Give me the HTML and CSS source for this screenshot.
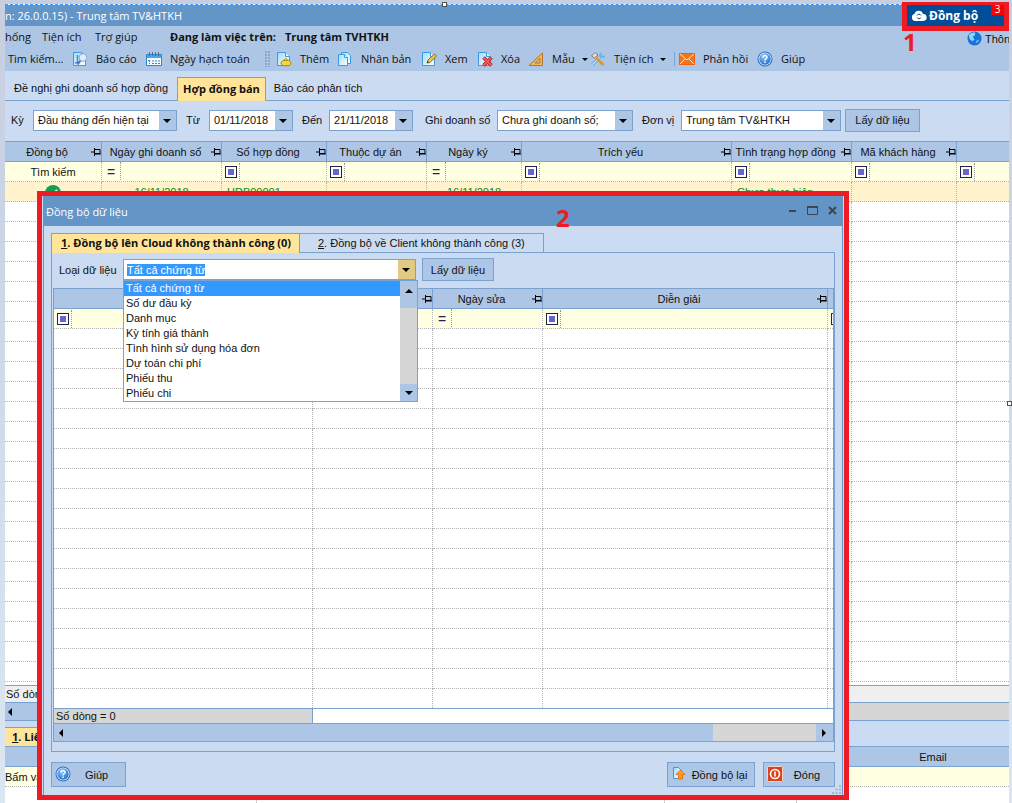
FILE: index.html
```html
<!DOCTYPE html>
<html lang="vi">
<head>
    <meta charset="UTF-8">
    <meta name="viewport" content="width=device-width, initial-scale=1.0">
    <title>Đồng bộ dữ liệu</title>
    <link rel="stylesheet" href="styles.css">
</head>
<body>
    <!-- shared icons -->
    <svg class="defs" width="0" height="0">
        <defs>
            <linearGradient id="paper" x1="0" y1="0" x2="1" y2="1">
                <stop offset="0" stop-color="#9fdcff"/>
                <stop offset="1" stop-color="#ffffff"/>
            </linearGradient>
            <radialGradient id="ball" cx="0.4" cy="0.3" r="0.8">
                <stop offset="0" stop-color="#8fc8ff"/>
                <stop offset="1" stop-color="#1565c8"/>
            </radialGradient>
            <symbol id="page" viewBox="0 0 16 16">
                <path d="M1.500 1.500h8l4 4v9h-12z" fill="url(#paper)" stroke="#3a9be0"/>
                <path d="M9.500 1.500v4h4" fill="#fff" stroke="#3a9be0"/>
            </symbol>
            <symbol id="pin" viewBox="0 0 10 8">
                <path d="M0 4h3M3.500 0v8M4 1.500h5v4H4M4 6h6" fill="none" stroke="#000"/>
            </symbol>
            <symbol id="help" viewBox="0 0 16 16">
                <circle cx="8" cy="8" r="7.500" fill="#2a6fc4"/>
                <circle cx="8" cy="8" r="6.500" fill="#dcecff"/>
                <circle cx="8" cy="8" r="5.700" fill="url(#ball)"/>
                <path d="M6 6.500c0-3 4.200-2.600 4 0c-.2 1.300-2 1.300-2 3M8 10.500v1.500" fill="none" stroke="#fff" stroke-width="1.500"/>
            </symbol>
        </defs>
    </svg>

    <div class="window">
        <header class="titlebar">n: 26.0.0.15) - Trung tâm TV&amp;HTKH</header>

        <nav class="menu">
            <a href="#">hống</a>
            <a href="#">Tiện ích</a>
            <a href="#">Trợ giúp</a>
            <b>Đang làm việc trên:</b>
            <b>Trung tâm TVHTKH</b>
            <a href="#" class="notice">
                <svg width="15" height="15" viewBox="0 0 16 16"><circle cx="8" cy="8" r="7.500" fill="#1673d8"/><path d="M2 5c1-3 5-4 7-3l-1 3-2 1 2 3-2 2-3-2z" fill="#8fd0ff"/><path d="M10 10l3-1-1 3-3 1z" fill="#5fb2f5"/></svg>
                Thôn
            </a>
        </nav>

        <div class="toolbar">
            <button>Tìm kiếm...</button>
            <button>
                <svg width="16" height="16" viewBox="0 0 16 16"><use href="#page"/><path d="M5.500 4v7.500L3 12" fill="none" stroke="#4a7fd0" stroke-width="1.500"/><path d="M8.500 9.500L5.500 13.500" stroke="#4a6fae" stroke-width="2"/><circle cx="11" cy="6.500" r="3.800" fill="#d9f0ff" stroke="#8aa6d0"/></svg>
                Báo cáo
            </button>
            <button>
                <svg width="16" height="16" viewBox="0 0 16 16"><path d="M.5 3.500h15v11H.5z" fill="#f4fbff" stroke="#2f86cf"/><path d="M1 4h14v3H1z" fill="#4ba6e6"/><path d="M3.500 1v4M6.500 1v4M9.500 1v4M12.500 1v4" stroke="#5b6b7c"/><path d="M3.500 9v4M2 9.500h2M6 10h8M6 12.500h8" fill="none" stroke="#2f86cf" stroke-dasharray="2 1"/></svg>
                Ngày hạch toán
            </button>
            <i class="grip"></i>
            <button>
                <svg width="16" height="16" viewBox="0 0 16 16"><use href="#page"/><ellipse cx="10" cy="12" rx="5" ry="2.800" fill="#f5d938" stroke="#a88b12"/><path d="M8 9.500c0-2.500 3.500-2.500 3.500 0z" fill="#f9e77a" stroke="#a88b12"/></svg>
                Thêm
            </button>
            <button>
                <svg width="16" height="16" viewBox="0 0 16 16"><path d="M4.500 1.500h6l3 3v8h-9z" fill="url(#paper)" stroke="#3a9be0"/><path d="M1.500 3.500h6l3 3v8h-9z" fill="url(#paper)" stroke="#3a9be0"/><path d="M7.500 3.500v3h3" fill="#fff" stroke="#3a9be0"/></svg>
                Nhân bản
            </button>
            <button>
                <svg width="16" height="16" viewBox="0 0 16 16"><use href="#page"/><path d="M6 12l1-3 6.500-6 2 2L9 11.500z" fill="#f6c443" stroke="#8f6a1c"/><path d="M6 12l.6-2 1.500 1.400z" fill="#333"/></svg>
                Xem
            </button>
            <button>
                <svg width="16" height="16" viewBox="0 0 16 16"><use href="#page"/><path d="M6.500 6.500l8 8M14.500 6.500l-8 8" stroke="#a92020" stroke-width="3.600"/><path d="M6.500 6.500l8 8M14.500 6.500l-8 8" stroke="#ee5a5a" stroke-width="2"/></svg>
                Xóa
            </button>
            <button>
                <svg width="16" height="16" viewBox="0 0 16 16"><path d="M1 14.500L14.500 2v12.500z" fill="#f0b952" stroke="#b5752a"/><path d="M7 12l5-4.500V12z" fill="#adc6e5" stroke="#b5752a"/></svg>
                Mẫu <i class="caret"></i>
            </button>
            <button>
                <svg width="16" height="16" viewBox="0 0 16 16"><path d="M2.500 13.500l8-8" stroke="#4a9ad8" stroke-width="3"/><path d="M2.500 13.500l8-8" stroke="#d5efff" stroke-width="1.200"/><path d="M10.500 1.500v4h4.500" fill="none" stroke="#6fb3e6" stroke-width="2"/><path d="M6 7l7.500 7" stroke="#d59a3a" stroke-width="3"/><path d="M1.500 5L5 1.500l3 2.500-3.500 3z" fill="#e4e0d8" stroke="#85796a"/></svg>
                Tiện ích <i class="caret"></i>
            </button>
            <i class="bar"></i>
            <button>
                <svg width="16" height="16" viewBox="0 0 16 16"><path d="M.5 2.500h15v11H.5z" fill="#f2741c" stroke="#ef5f10"/><path d="M1 3l7 6 7-6M1 13l5-5M15 13l-5-5" fill="none" stroke="#ffe6cc"/></svg>
                Phản hồi
            </button>
            <button><svg width="16" height="16"><use href="#help"/></svg>Giúp</button>
        </div>

        <div class="tabs">
            <a href="#">Đề nghị ghi doanh số hợp đồng</a>
            <a href="#" class="active">Hợp đồng bán</a>
            <a href="#">Báo cáo phân tích</a>
        </div>

        <form class="filters">
            <label for="period" class="l-period">Kỳ</label>
            <span class="combo w-period"><select id="period"><option>Đầu tháng đến hiện tại</option></select></span>
            <label for="from" class="l-from">Từ</label>
            <span class="combo w-date"><select id="from"><option>01/11/2018</option></select></span>
            <label for="to" class="l-to">Đến</label>
            <span class="combo w-date"><select id="to"><option>21/11/2018</option></select></span>
            <label for="sales" class="l-sales">Ghi doanh số</label>
            <span class="combo w-sales"><select id="sales"><option>Chưa ghi doanh số;</option></select></span>
            <label for="unit" class="l-unit">Đơn vị</label>
            <span class="combo w-unit"><select id="unit"><option>Trung tâm TV&amp;HTKH</option></select></span>
            <button type="button" class="btn">Lấy dữ liệu</button>
        </form>

        <table class="grid" id="contracts" data-rows="24">
            <colgroup><col class="c97"><col class="c120"><col class="c105"><col class="c100"><col class="c95"><col class="c210"><col class="c120"><col class="c105"><col></colgroup>
            <thead>
                <tr>
                    <th>Đồng bộ<svg><use href="#pin"/></svg></th>
                    <th>Ngày ghi doanh số<svg><use href="#pin"/></svg></th>
                    <th>Số hợp đồng<svg><use href="#pin"/></svg></th>
                    <th>Thuộc dự án<svg><use href="#pin"/></svg></th>
                    <th>Ngày ký<svg><use href="#pin"/></svg></th>
                    <th>Trích yếu<svg><use href="#pin"/></svg></th>
                    <th>Tình trạng hợp đồng<svg><use href="#pin"/></svg></th>
                    <th>Mã khách hàng<svg><use href="#pin"/></svg></th>
                    <th></th>
                </tr>
            </thead>
            <tbody>
                <tr class="search">
                    <td class="center">Tìm kiếm</td>
                    <td><i class="eq">=</i></td>
                    <td><i class="box"></i></td>
                    <td><i class="box"></i></td>
                    <td><i class="eq">=</i></td>
                    <td><i class="box"></i></td>
                    <td><i class="box"></i></td>
                    <td><i class="box"></i></td>
                    <td><i class="box"></i></td>
                </tr>
                <tr class="selected">
                    <td class="center"><svg width="16" height="16" viewBox="0 0 16 16"><circle cx="8" cy="8" r="8" fill="#0fa14f"/><path d="M4 8l3 3 5-6" fill="none" stroke="#fff" stroke-width="2"/></svg></td>
                    <td class="center">16/11/2018</td>
                    <td>HDB00001</td>
                    <td></td>
                    <td class="center">16/11/2018</td>
                    <td></td>
                    <td>Chưa thực hiện</td>
                    <td></td>
                    <td></td>
                </tr>
            </tbody>
        </table>
        <div class="total">Số dòng</div>
        <div class="scroll main-scroll"><span class="thumb"><i class="left"></i></span></div>

        <div class="detail-tabs"><a href="#"><u>1</u>. Liê</a></div>
        <table class="grid detail">
            <colgroup><col class="c252"><col class="c408"><col class="c132"><col></colgroup>
            <thead><tr><th></th><th></th><th></th><th class="email">Email</th></tr></thead>
            <tbody>
                <tr class="search"><td colspan="4">Bấm vào</td></tr>
                <tr><td></td><td></td><td></td><td></td></tr>
            </tbody>
        </table>
    </div>

    <section class="dialog" role="dialog" aria-labelledby="dialogTitle">
        <div class="dialog-title">
            <span id="dialogTitle">Đồng bộ dữ liệu</span>
            <button aria-label="Thu nhỏ"><svg width="11" height="11" viewBox="0 0 11 11"><path d="M2 6h7" stroke="#444" stroke-width="2"/></svg></button>
            <button aria-label="Phóng to"><svg width="11" height="11" viewBox="0 0 11 11"><path d="M.5 1.500h10v8H.5z" fill="none" stroke="#444"/><path d="M0 2h11" stroke="#444" stroke-width="2"/></svg></button>
            <button aria-label="Đóng cửa sổ"><svg width="11" height="11" viewBox="0 0 11 11"><path d="M2 2l7 7M9 2l-7 7" stroke="#444" stroke-width="2"/></svg></button>
        </div>
        <div class="dialog-body">
            <div class="dialog-tabs">
                <a href="#" class="active"><u>1</u>. Đồng bộ lên Cloud không thành công (0)</a>
                <a href="#"><u>2</u>. Đồng bộ về Client không thành công (3)</a>
            </div>
            <div class="panel">
                <div class="panel-filter">
                    <label for="dataType">Loại dữ liệu</label>
                    <span class="combo open">
                        <input type="text" id="dataType" value="Tất cả chứng từ" role="combobox" aria-expanded="true" aria-controls="typeList">
                        <span class="list-wrap">
                            <ul id="typeList" role="listbox">
                                <li role="option" aria-selected="true">Tất cả chứng từ</li>
                                <li role="option">Số dư đầu kỳ</li>
                                <li role="option">Danh mục</li>
                                <li role="option">Kỳ tính giá thành</li>
                                <li role="option">Tình hình sử dụng hóa đơn</li>
                                <li role="option">Dự toán chi phí</li>
                                <li role="option">Phiếu thu</li>
                                <li role="option">Phiếu chi</li>
                            </ul>
                            <span class="list-scroll"><i class="up"></i><i class="down"></i></span>
                        </span>
                    </span>
                    <button class="btn">Lấy dữ liệu</button>
                </div>
                <div class="panel-grid">
                    <table class="grid" id="failed" data-rows="19">
                        <colgroup><col class="c259"><col class="c120"><col class="c110"><col class="c285"><col></colgroup>
                        <thead>
                            <tr>
                                <th></th>
                                <th><svg><use href="#pin"/></svg></th>
                                <th>Ngày sửa<svg><use href="#pin"/></svg></th>
                                <th>Diễn giải<svg><use href="#pin"/></svg></th>
                                <th></th>
                            </tr>
                        </thead>
                        <tbody>
                            <tr class="search">
                                <td><i class="box"></i></td>
                                <td><i class="box"></i></td>
                                <td><i class="eq">=</i></td>
                                <td><i class="box"></i></td>
                                <td><i class="box"></i></td>
                            </tr>
                        </tbody>
                    </table>
                    <div class="total"><span>Số dòng = 0</span></div>
                    <div class="scroll"><span class="thumb"><i class="left"></i></span><span class="end"><i class="right"></i></span></div>
                </div>
            </div>
            <div class="actions">
                <button class="btn help"><svg width="16" height="16"><use href="#help"/></svg>Giúp</button>
                <button class="btn retry">
                    <svg width="16" height="16" viewBox="0 0 16 16"><path d="M1.500 1.500h5l3 3v8h-8z" fill="url(#paper)" stroke="#3a9be0"/><path d="M8.500 4l4.500 4.500h-2.500V13h-4V8.500H4z" fill="#ff9a1f" stroke="#e07a10"/></svg>
                    Đồng bộ lại
                </button>
                <button class="btn close">
                    <svg width="16" height="16" viewBox="0 0 16 16"><rect x=".5" y=".5" width="15" height="15" rx="1" fill="#d9431f" stroke="#f7d3c8"/><circle cx="8" cy="8" r="4.500" fill="none" stroke="#fff" stroke-width="1.600"/><path d="M8 5.500v5" stroke="#fff" stroke-width="1.600"/></svg>
                    Đóng
                </button>
            </div>
        </div>
        <svg class="resize" width="9" height="9" viewBox="0 0 9 9"><path d="M7 0h2v2H7zM3.500 3.500h2v2h-2zM7 3.500h2v2H7zM0 7h2v2H0zM3.500 7h2v2h-2zM7 7h2v2H7z" fill="#a9b4c4"/></svg>
        <strong class="step two">2</strong>
    </section>

    <!-- highlighted sync button -->
    <div class="sync">
        <button>
            <svg width="16" height="12" viewBox="0 0 16 12"><path d="M4 11a3.600 3.600 0 0 1-.6-7A4.500 4.500 0 0 1 12 4a3.500 3.500 0 0 1 .3 7z" fill="#fff"/><path d="M6 5.500a2.200 2.200 0 0 1 4 0M10 7.500a2.200 2.200 0 0 1-4 0" fill="none" stroke="#004e98"/></svg>
            Đồng bộ
            <span class="badge">3</span>
        </button>
        <strong class="step one">1</strong>
    </div>
    <i class="handle top"></i>
    <i class="handle side"></i>

    <script>
        // fill the tables with blank rows
        document.querySelectorAll("table[data-rows]").forEach(function(table) {
            const columns = table.querySelectorAll("col").length;
            for (let i = 0; i < Number(table.dataset.rows); i++) {
                const row = table.tBodies[0].insertRow();
                for (let j = 0; j < columns; j++) row.insertCell();
            }
        });

        const dataType = document.getElementById("dataType");
        dataType.focus({ preventScroll: true });
        dataType.select();
    </script>
</body>
</html>
```
FILE: styles.css
```css
* {
    margin: 0;
    padding: 0;
    box-sizing: border-box;
}
body {
    position: relative;
    height: 100vh;
    overflow: hidden;
    padding: 4px 3px 0 5px;
    background: linear-gradient(#c6cedf, #dbe6f3);
    font: 11px/14px "Liberation Sans", Arial, sans-serif;
    color: #111;
}
a {
    color: inherit;
    text-decoration: none;
}
button, input, select {
    font: inherit;
    color: inherit;
}
i {
    font-style: normal;
}
.defs {
    position: absolute;
}
.window {
    height: 100%;
    overflow: hidden;
    background: #fff;
    border-top: 1px dashed #3399ff;
}

/* title, menu, toolbar */
.titlebar {
    height: 21px;
    padding-top: 1px;
    background: #6495c7;
    color: #fff;
    font: 11px/20px "Open Sans", sans-serif;
}
.menu {
    display: grid;
    grid-template-columns: 37px 53px 75px 115px 1fr auto;
    height: 23px;
    background: #adc6e5;
    font: 11px/22px "Open Sans", sans-serif;
    white-space: nowrap;
}
.notice {
    display: flex;
    gap: 3px;
    width: 42px;
    overflow: hidden;
    padding-top: 5px;
    font: 11px/16px "Liberation Sans", Arial, sans-serif;
}
.notice svg {
    flex: none;
}
.toolbar {
    display: grid;
    grid-template-columns: 65px 74px 118px 12px 61px 84px 56px 51px 62px 83px 6px 78px auto;
    justify-content: start;
    align-items: center;
    height: 22px;
    padding: 0 0 2px 3px;
    background: #adc6e5;
}
.toolbar button {
    display: flex;
    align-items: center;
    gap: 7px;
    height: 20px;
    border: 0;
    background: none;
    font: 11px/20px "Open Sans", sans-serif;
    white-space: nowrap;
}
.toolbar svg {
    flex: none;
    margin-left: -1px;
    margin-right: 1px;
}
.grip {
    width: 5px;
    height: 16px;
    background: radial-gradient(circle at 1px 1px, #8ba6c8 1px, transparent 1px) 0 0 / 3px 3px;
}
.bar {
    width: 1px;
    height: 14px;
    background: #7ba2ce;
}
.caret, .combo::after, .left, .right, .up, .down {
    width: 0;
    height: 0;
    border: 0 solid transparent;
    border-top-color: #000;
}
.caret {
    border-width: 3px 3px 0;
}

/* tabs */
.tabs {
    display: flex;
    height: 30px;
    padding: 6px 0 0 1px;
    background: #cbdbf1;
    border-bottom: 1px solid #7ba2ce;
}
.tabs a {
    height: 23px;
    padding: 0 9px 0 8px;
    line-height: 23px;
    white-space: nowrap;
}
.tabs .active {
    height: 24px;
    padding: 0 5px;
    background: #ffe49a;
    border: 1px solid #7ba2ce;
    border-bottom: 0;
    font: bold 11px/22px "Open Sans", sans-serif;
}

/* filter row */
.filters {
    display: flex;
    align-items: center;
    height: 40px;
    padding-bottom: 2px;
    background: #cbdbf1;
    white-space: nowrap;
}
.l-period { width: 28px; padding-left: 6px; }
.l-from { width: 32px; padding-left: 9px; }
.l-to { width: 36px; padding-left: 9px; }
.l-sales { width: 84px; padding-left: 12px; }
.l-unit { width: 48px; padding-left: 9px; }
.w-period { width: 144px; }
.w-date { width: 84px; }
.w-sales { width: 136px; }
.w-unit { width: 160px; }
.filters .btn {
    width: 75px;
    margin-left: 4px;
}
.combo {
    position: relative;
    flex: none;
    height: 21px;
    border: 1px solid #7ba2ce;
    background: #fff;
}
.combo::before {
    content: "";
    position: absolute;
    top: 0;
    right: 0;
    width: 17px;
    height: 100%;
    background: #adc6e5;
}
.combo::after {
    content: "";
    position: absolute;
    top: 8px;
    right: 5px;
    border-width: 4px 4px 0;
}
.combo select, .combo input {
    appearance: none;
    display: block;
    width: 100%;
    height: 19px;
    padding: 0 20px 0 4px;
    border: 0;
    outline: 0;
    background: none;
}
.btn {
    display: flex;
    align-items: center;
    justify-content: center;
    height: 23px;
    border: 1px solid #7ba2ce;
    background: #adc6e5;
    white-space: nowrap;
}

/* data grids */
.grid {
    width: 100%;
    table-layout: fixed;
    border-collapse: separate;
    border-spacing: 0;
    background: #fff;
    white-space: nowrap;
}
.c95 { width: 95px; }
.c97 { width: 97px; }
.c100 { width: 100px; }
.c105 { width: 105px; }
.c110 { width: 110px; }
.c120 { width: 120px; }
.c132 { width: 132px; }
.c210 { width: 210px; }
.c252 { width: 252px; }
.c259 { width: 259px; }
.c285 { width: 285px; }
.c408 { width: 408px; }
.grid th {
    position: relative;
    height: 21px;
    padding-right: 12px;
    background: #adc6e5;
    border: 1px solid #7ba2ce;
    border-left: 0;
    font-weight: normal;
}
.grid th svg {
    position: absolute;
    top: 6px;
    right: 0;
    width: 10px;
    height: 8px;
}
.grid td {
    height: 20px;
    padding-left: 5px;
    border-right: 1px dotted #b4b4b4;
    border-bottom: 1px dotted #b4b4b4;
    overflow: hidden;
}
.grid th:last-child, .grid td:last-child {
    border-right: 0;
}
.grid td.center {
    padding: 0;
    text-align: center;
}
.search td {
    background: #ffffe1;
}
.selected td {
    background: #fff2cd;
    color: #0a8a0a;
}
.selected svg {
    display: block;
    margin: 2px auto 0;
}
.eq, .box {
    display: block;
    position: relative;
    width: 12px;
    height: 12px;
    line-height: 12px;
}
.eq {
    color: #22225a;
    font-size: 14px;
}
.box {
    margin-left: -2px;
    padding: 2px;
    border: 1px solid #22225a;
    background: #6666cc content-box;
    box-shadow: inset 0 0 0 2px #fff;
}
.eq::after, .box::after {
    content: "";
    position: absolute;
    top: -4px;
    left: 13px;
    height: 18px;
    border-left: 1px dotted #999;
}
#contracts {
    border-bottom: 3px solid #fff;
}
#failed tr:last-child td {
    height: 19px;
    border-bottom: 0;
}
.total {
    height: 17px;
    padding-left: 1px;
    background: #efefef;
    border-top: 1px solid #7ba2ce;
    line-height: 16px;
}
.scroll {
    display: flex;
    height: 19px;
    background: #d6d6d6;
    border: 1px solid #7ba2ce;
    border-width: 1px 0;
}
.thumb, .end {
    display: flex;
    align-items: center;
    background: #adc6e5;
}
.thumb {
    flex: 1;
    padding-left: 5px;
}
.main-scroll .thumb {
    flex: 0 0 80%;
    padding-left: 3px;
}
.end {
    width: 17px;
    margin-left: 103px;
    padding-left: 6px;
}
.left {
    border-width: 4px 4px 4px 0;
    border-color: transparent #000;
}
.right {
    border-width: 4px 0 4px 4px;
    border-color: transparent #000;
}
.up {
    border-width: 0 4px 4px;
    border-bottom-color: #000;
}
.down {
    border-width: 4px 4px 0;
}
.detail-tabs {
    height: 25px;
    padding-top: 6px;
    background: #cbdbf1;
}
.detail-tabs a {
    display: inline-block;
    height: 19px;
    padding: 0 7px;
    background: #ffe49a;
    border-top: 1px solid #7ba2ce;
    font: bold 11px/18px "Open Sans", sans-serif;
}
.detail .search td {
    padding-left: 0;
}
.detail .email {
    padding: 0 0 0 60px;
}

/* dialog over the window */
.dialog {
    position: absolute;
    top: 191px;
    left: 37px;
    right: 163px;
    padding: 0 1px;
    background: #cbdbf1;
    border: 5px solid #ed1c24;
}
.dialog-title {
    display: flex;
    align-items: center;
    gap: 9px;
    height: 30px;
    padding: 0 5px 2px 3px;
    background: #6495c7;
    color: #fff;
    font: 11px/20px "Open Sans", sans-serif;
}
.dialog-title span {
    flex: 1;
    padding-top: 3px;
}
.dialog-title button {
    width: 11px;
    height: 11px;
    border: 0;
    background: none;
}
.dialog-title svg {
    display: block;
}
.dialog-body {
    padding: 7px 7px 8px;
    border: 1px solid #6495c7;
    border-width: 0 1px;
}
.dialog-tabs {
    display: flex;
}
.dialog-tabs a {
    height: 20px;
    padding: 0 18px;
    border: 1px solid #7ba2ce;
    border-width: 1px 1px 0 0;
    line-height: 18px;
    white-space: nowrap;
}
.dialog-tabs .active {
    padding: 0 8px 0 9px;
    background: #ffe49a;
    border-left-width: 1px;
    font: bold 11px/18px "Open Sans", sans-serif;
}
.panel {
    margin-top: -1px;
    padding: 5px 0 9px 1px;
    border: 1px solid #7ba2ce;
}
.panel-filter {
    display: flex;
    align-items: center;
    height: 23px;
    margin-bottom: 7px;
}
.panel-filter label {
    width: 70px;
    padding-left: 6px;
    white-space: nowrap;
}
.panel-filter .btn {
    width: 72px;
    margin-left: 6px;
}
.combo.open {
    width: 293px;
}
.open::before {
    background: #e3ca82;
}
.open input {
    padding-left: 3px;
}
.open input::selection {
    background: #3399ff;
    color: #fff;
}
.list-wrap {
    position: absolute;
    z-index: 2;
    top: 20px;
    left: -1px;
    display: flex;
    width: 295px;
    border: 1px solid #7ba2ce;
    background: #fff;
}
.list-wrap ul {
    flex: 1;
    list-style: none;
}
.list-wrap li {
    height: 15px;
    padding-left: 2px;
    line-height: 15px;
}
.list-wrap li[aria-selected] {
    background: #3399ff;
    color: #fff;
}
.list-scroll {
    display: flex;
    flex-direction: column;
    justify-content: space-between;
    align-items: center;
    width: 17px;
    padding: 8px 0 6px;
    background: linear-gradient(#adc6e5 27px, #d6d6d6 27px, #d6d6d6 103px, #adc6e5 103px);
}
.panel-grid {
    border: 1px solid #7ba2ce;
    border-width: 0 1px 0 1px;
}
.panel-grid .total {
    height: 15px;
    padding: 0;
    background: #fff;
    line-height: 14px;
}
.total span {
    display: block;
    width: 259px;
    padding-left: 2px;
    background: #d6d6d6;
    border-right: 1px solid #7ba2ce;
}
.actions {
    display: flex;
    gap: 8px;
    padding-top: 10px;
}
.actions .btn {
    height: 25px;
}
.actions .btn svg {
    margin-top: -2px;
}
.help {
    gap: 14px;
    width: 75px;
    margin-right: auto;
    padding-right: 14px;
}
.retry {
    gap: 4px;
    width: 88px;
    padding-right: 3px;
}
.close {
    gap: 11px;
    width: 72px;
    padding-right: 11px;
}
.resize {
    position: absolute;
    right: 3px;
    bottom: 1px;
}

/* sync button with its callout */
.sync {
    position: absolute;
    top: 2px;
    right: 3px;
    width: 107px;
    height: 29px;
    border: 5px solid #ed1c24;
    border-top-width: 3px;
    background: #fff;
}
.sync button {
    position: relative;
    display: flex;
    align-items: center;
    gap: 2px;
    width: 100%;
    height: 21px;
    padding-left: 4px;
    border: 0;
    background: #004e98;
    color: #fff;
    font: bold 12px/20px "Open Sans", sans-serif;
}
.badge {
    position: absolute;
    top: 0;
    right: 0;
    width: 13px;
    height: 10px;
    background: #ff0000;
    font: 10px/9px "Open Sans", sans-serif;
}
.step {
    position: absolute;
    color: #ed1c24;
    font: bold 24px/24px "Open Sans", sans-serif;
}
.one {
    top: 25px;
    left: -4px;
}
.two {
    top: 10px;
    left: 514px;
}
.handle {
    position: absolute;
    width: 5px;
    height: 5px;
    border: 1px solid #555;
    background: #fff;
}
.handle.top {
    top: 2px;
    left: 442px;
}
.handle.side {
    top: 401px;
    right: 0;
}
```
